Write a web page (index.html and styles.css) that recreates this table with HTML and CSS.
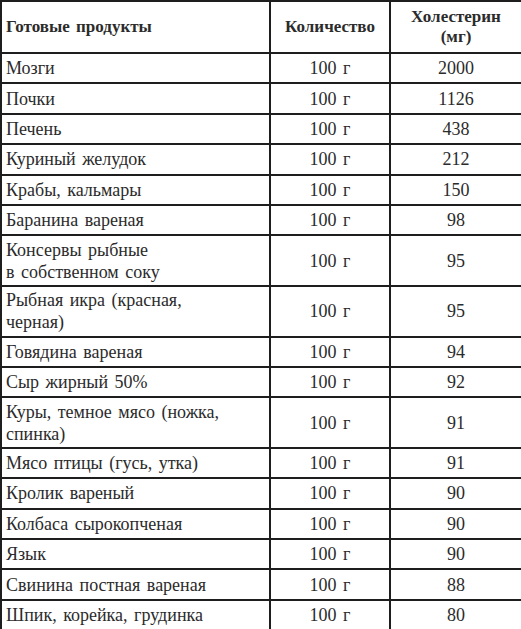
FILE: index.html
```html
<!DOCTYPE html>
<html lang="ru">
<head>
<meta charset="utf-8">
<title>Готовые продукты</title>
<link rel="stylesheet" href="styles.css">
</head>
<body>
<table class="chol">
  <colgroup>
    <col class="c-name">
    <col class="c-qty">
    <col class="c-val">
  </colgroup>
  <thead>
    <tr class="head">
      <th class="name">Готовые продукты</th>
      <th>Количество</th>
      <th>Холестерин<br>(мг)</th>
    </tr>
  </thead>
  <tbody>
    <tr><td class="name">Мозги</td><td>100 г</td><td>2000</td></tr>
    <tr><td class="name">Почки</td><td>100 г</td><td>1126</td></tr>
    <tr><td class="name">Печень</td><td>100 г</td><td>438</td></tr>
    <tr><td class="name">Куриный желудок</td><td>100 г</td><td>212</td></tr>
    <tr><td class="name">Крабы, кальмары</td><td>100 г</td><td>150</td></tr>
    <tr><td class="name">Баранина вареная</td><td>100 г</td><td>98</td></tr>
    <tr class="two"><td class="name">Консервы рыбные<br>в собственном соку</td><td>100 г</td><td>95</td></tr>
    <tr class="two"><td class="name">Рыбная икра (красная,<br>черная)</td><td>100 г</td><td>95</td></tr>
    <tr><td class="name">Говядина вареная</td><td>100 г</td><td>94</td></tr>
    <tr><td class="name">Сыр жирный 50%</td><td>100 г</td><td>92</td></tr>
    <tr class="two"><td class="name">Куры, темное мясо (ножка,<br>спинка)</td><td>100 г</td><td>91</td></tr>
    <tr><td class="name">Мясо птицы (гусь, утка)</td><td>100 г</td><td>91</td></tr>
    <tr><td class="name">Кролик вареный</td><td>100 г</td><td>90</td></tr>
    <tr><td class="name">Колбаса сырокопченая</td><td>100 г</td><td>90</td></tr>
    <tr><td class="name">Язык</td><td>100 г</td><td>90</td></tr>
    <tr><td class="name">Свинина постная вареная</td><td>100 г</td><td>88</td></tr>
    <tr><td class="name">Шпик, корейка, грудинка</td><td>100 г</td><td>80</td></tr>
  </tbody>
</table>
</body>
</html>
```
FILE: styles.css
```css
html, body {
  margin: 0;
  padding: 0;
  background: #fff;
  font-family: serif;
}
.chol {
  border-collapse: collapse;
  table-layout: fixed;
  width: 521px;
  color: #2b2b2b;
  font-family: serif;
}
.c-name { width: 269px; }
.c-qty { width: 120px; }
.c-val { width: 132px; }
.chol th, .chol td {
  font-family: serif;
  font-size: 18px;
  border: 2px solid #1e1e1e;
  padding: 0 2px;
  text-align: center;
  vertical-align: middle;
  line-height: 22px;
  word-spacing: 2px;
}
.chol th {
  font-weight: bold;
  font-size: 17px;
  line-height: 20px;
}
.chol .name {
  text-align: left;
  padding-left: 4px;
}
.head { height: 52px; }
.chol tbody tr { height: 30.4px; }
.chol tbody tr.two { height: 50.6px; }
```
